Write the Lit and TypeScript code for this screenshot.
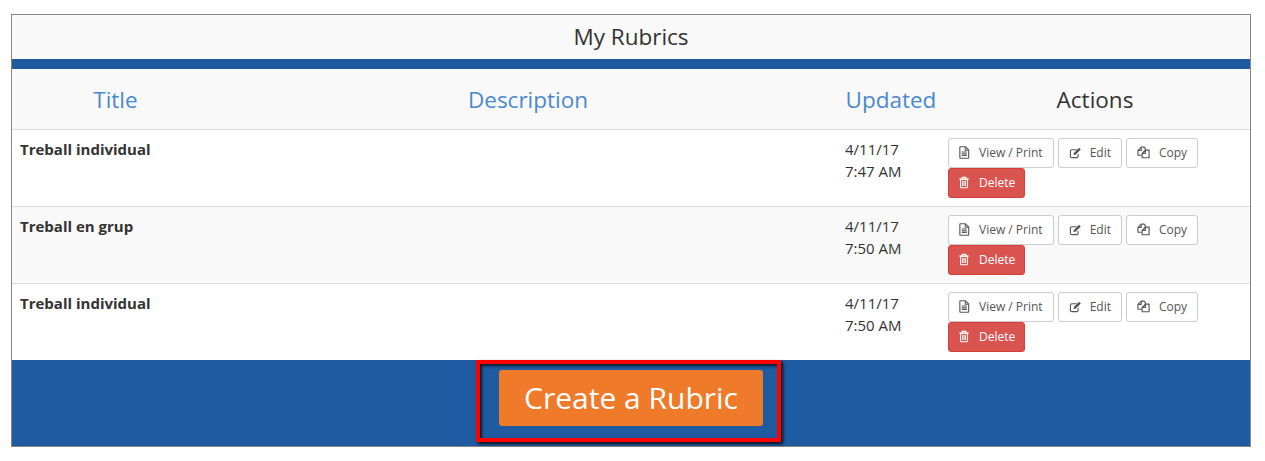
import { LitElement, html, css, svg } from "lit";
import { customElement } from "lit/decorators.js";

const icons = {
  view: svg`<path d="M2.500 .8h5.400l3.600 3.600v8.300a.5.5 0 0 1-.5.5H2.500a.5.5 0 0 1-.5-.5V1.300a.5.5 0 0 1 .5-.5z" fill="none" stroke="currentColor" stroke-width="1.200"/><path d="M7.800 1v3.500h3.500M4 6.500h5.500M4 8.300h5.500M4 10.100h5.500" fill="none" stroke="currentColor" stroke-width="1.100"/>`,
  edit: svg`<path d="M9.800 8.500v2.500a1.500 1.500 0 0 1-1.500 1.500H3A1.500 1.500 0 0 1 1.500 11V5.500A1.500 1.500 0 0 1 3 4h5.200" fill="none" stroke="currentColor" stroke-width="1.200"/><path d="M4.800 9.800l.5-2.300 5.500-5.500 1.900 1.800-5.600 5.500z" fill="currentColor"/>`,
  copy: svg`<path d="M4.500 1.200h3l1.500 1.500v1.800M4.500 1.200L1 4.700v5.300h4" fill="none" stroke="currentColor" stroke-width="1.200"/><path d="M1.200 4.700h3.300V1.500M9 4.500h4v8.200H5.500V8L9 4.500zM9 4.500V8H5.500" fill="none" stroke="currentColor" stroke-width="1.200"/>`,
  trash: svg`<path d="M1.200 3.300h10.600M4.500 3V1.500h4V3" fill="none" stroke="currentColor" stroke-width="1.200"/><path d="M2.800 3.500h7.400v8.300a.8.800 0 0 1-.8.800H3.600a.8.800 0 0 1-.8-.8z" fill="none" stroke="currentColor" stroke-width="1.200"/><path d="M5 5.300v5.500M6.500 5.300v5.500M8 5.300v5.500" stroke="currentColor" stroke-width="1"/>`,
};

const rows = [
  { title: "Treball individual", date: "4/11/17", time: "7:47 AM" },
  { title: "Treball en grup", date: "4/11/17", time: "7:50 AM" },
  { title: "Treball individual", date: "4/11/17", time: "7:50 AM" },
];

@customElement("app-root")
export class AppRoot extends LitElement {
  static styles = css`
    :host {
      display: block;
      padding: 14px 14px 14px 11px;
      font-family: "Open Sans", sans-serif;
      color: #333;
      background: #fff;
    }
    * { box-sizing: border-box; }
    .panel { border: 1px solid #888; }
    .heading {
      height: 44px;
      background: #f9f9f9;
      border-bottom: 10px solid #1f5ba1;
      box-sizing: content-box;
      font-size: 22.500px;
      line-height: 43px;
      text-align: center;
    }
    table {
      width: 100%;
      table-layout: fixed;
      border-collapse: collapse;
    }
    th {
      height: 60px;
      font-size: 22.500px;
      font-weight: 400;
      text-align: center;
      background: #f9f9f9;
      border-bottom: 1px solid #ddd;
      padding: 1px 0 0;
      color: #333;
    }
    th.link { color: #4a89cf; }
    th.left { text-align: left; padding-left: 8.500px; }
    td {
      height: 77px;
      vertical-align: top;
      padding: 8px;
      font-size: 15px;
      line-height: 22px;
      border-bottom: 1px solid #ddd;
    }
    tr:nth-child(even) td { background: #f9f9f9; }
    tr:last-child td { border-bottom: 0; height: 76px; }
    td.title { font-weight: 700; }
    .btns { display: flex; flex-wrap: wrap; column-gap: 4px; width: 270px; }
    .btn {
      display: inline-flex;
      align-items: center;
      height: 30px;
      padding: 0 10px;
      border: 1px solid #ccc;
      border-radius: 3px;
      background: #fff;
      font-size: 12px;
      line-height: 18px;
      color: #555;
      white-space: nowrap;
    }
    .btn svg { width: 13px; height: 13px; margin: 0 8px 0 -1px; flex: none; }
    .btn.edit svg { margin: 0 8px 0 0; }
    .btn.copy svg { margin: 0 9px 0 0; }
    .btn.danger {
      background: #d9534f;
      border-color: #d43f3a;
      color: #fff;
      padding-right: 9px;
    }
    .break { flex-basis: 100%; height: 0; }
    .foot {
      height: 86px;
      background: #1f5ba1;
      display: flex;
      justify-content: center;
      align-items: flex-start;
      padding-right: 5px;
    }
    .frame {
      border: 4px solid #f00;
      padding: 6px 14px 12px 19px;
      box-shadow: 2px 2px 3px rgba(0, 0, 0, 0.85), inset 2px 2px 3px rgba(0, 0, 0, 0.75);
    }
    .create {
      display: block;
      width: 264px;
      height: 56px;
      border-radius: 3px;
      background: #ee7a2a;
      color: #fff;
      font-size: 30px;
      line-height: 56px;
      text-align: center;
    }
  `;

  private icon(name: keyof typeof icons) {
    return html`<svg viewBox="0 0 14 14" aria-hidden="true">${icons[name]}</svg>`;
  }

  render() {
    return html`
      <div class="panel">
        <div class="heading">My Rubrics</div>
        <table>
          <colgroup>
            <col style="width:207px" /><col style="width:618px" /><col style="width:103px" /><col />
          </colgroup>
          <thead>
            <tr>
              <th class="link">Title</th>
              <th class="link">Description</th>
              <th class="link left">Updated</th>
              <th>Actions</th>
            </tr>
          </thead>
          <tbody>
            ${rows.map(
              (r) => html`<tr>
                <td class="title">${r.title}</td>
                <td></td>
                <td>${r.date}<br />${r.time}</td>
                <td>
                  <div class="btns">
                    <span class="btn">${this.icon("view")}View / Print</span>
                    <span class="btn edit">${this.icon("edit")}Edit</span>
                    <span class="btn copy">${this.icon("copy")}Copy</span>
                    <span class="break"></span>
                    <span class="btn danger">${this.icon("trash")}Delete</span>
                  </div>
                </td>
              </tr>`
            )}
          </tbody>
        </table>
        <div class="foot">
          <div class="frame"><span class="create">Create a Rubric</span></div>
        </div>
      </div>
    `;
  }
}
